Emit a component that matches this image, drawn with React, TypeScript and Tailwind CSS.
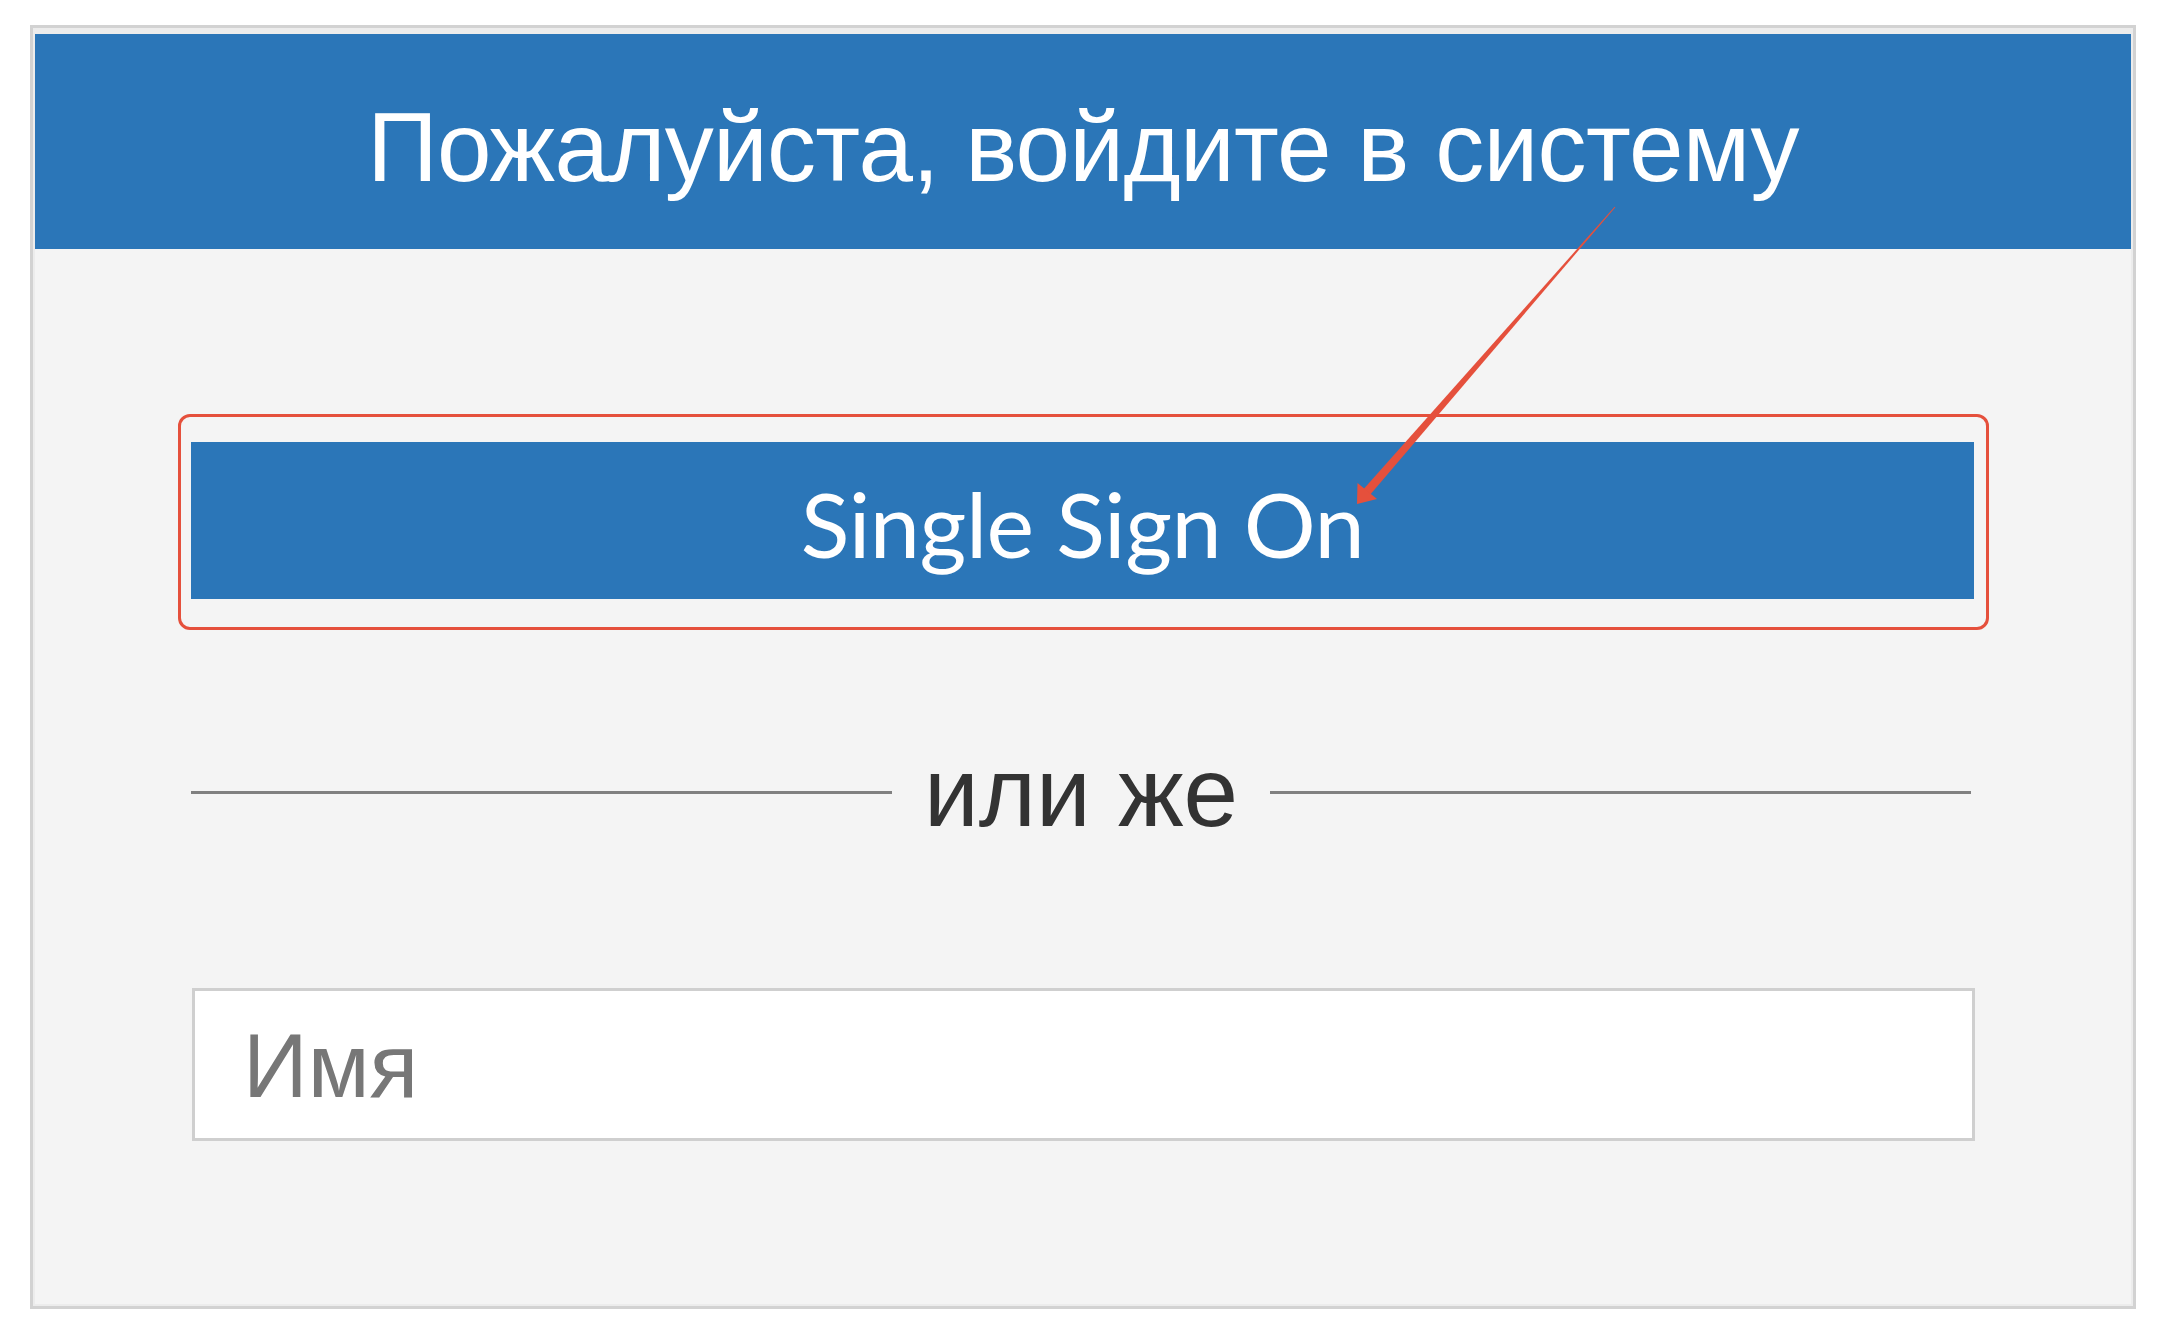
import React from "react";

export default function App() {
  return (
    <div className="relative w-[2161px] h-[1327px] bg-white overflow-hidden">
      <div className="ml-[30px] pt-[25px]">
        <div className="w-[2106px] h-[1284px] border-[3px] border-[#d2d2d2] bg-[#ececec] pt-[6px] px-[2px] pb-[2px] flex flex-col">
          <div className="h-[215px] bg-[#2b76b8] flex items-center justify-center shrink-0">
            <h1
              className="text-white text-[98px] leading-none tracking-[-0.7px] pt-[10px]"
              style={{ fontFamily: '"Liberation Sans", Arial, sans-serif' }}
            >
              Пожалуйста, войдите в систему
            </h1>
          </div>
          <div className="flex-1 bg-[#f4f4f4] pl-[143px] pr-[142px] pt-[165px]">
            <div className="border-[3px] border-[#e5503c] rounded-[12px] pl-[10px] pr-[12px] pt-[25px] pb-[28px]">
              <button
                className="w-full h-[157px] bg-[#2b76b8] text-white text-[90px] leading-none tracking-[-0.5px] flex items-center justify-center pt-[4px]"
                style={{ fontFamily: 'Lato, "Open Sans", sans-serif' }}
              >
                Single Sign On
              </button>
            </div>
            <div className="mt-[112px] h-[100px] flex items-center pl-[13px] pr-[18px]">
              <div className="flex-1 h-[3px] bg-[#808080]" />
              <span
                className="mx-[32px] text-[#333] text-[98px] leading-none"
                style={{ fontFamily: '"Liberation Sans", Arial, sans-serif' }}
              >
                или же
              </span>
              <div className="flex-1 h-[3px] bg-[#808080]" />
            </div>
            <div className="mt-[146px] ml-[14px] mr-[14px] h-[153px] bg-white border-[3px] border-[#cfcfcf] flex items-center pl-[48px]">
              <span
                className="text-[#777] text-[90px] leading-none pt-[2px]"
                style={{ fontFamily: '"Liberation Sans", Arial, sans-serif' }}
              >
                Имя
              </span>
            </div>
          </div>
        </div>
      </div>
      <svg
        className="absolute top-0 left-0 pointer-events-none"
        width="2161"
        height="1327"
        viewBox="0 0 2161 1327"
      >
        <polygon
          points="1615.4,207.2 1370.3,494.5 1363.7,488.9 1614.6,206.8"
          fill="#e5503c"
        />
        <polygon points="1357,504 1357.5,483 1377,499" fill="#e5503c" />
      </svg>
    </div>
  );
}
